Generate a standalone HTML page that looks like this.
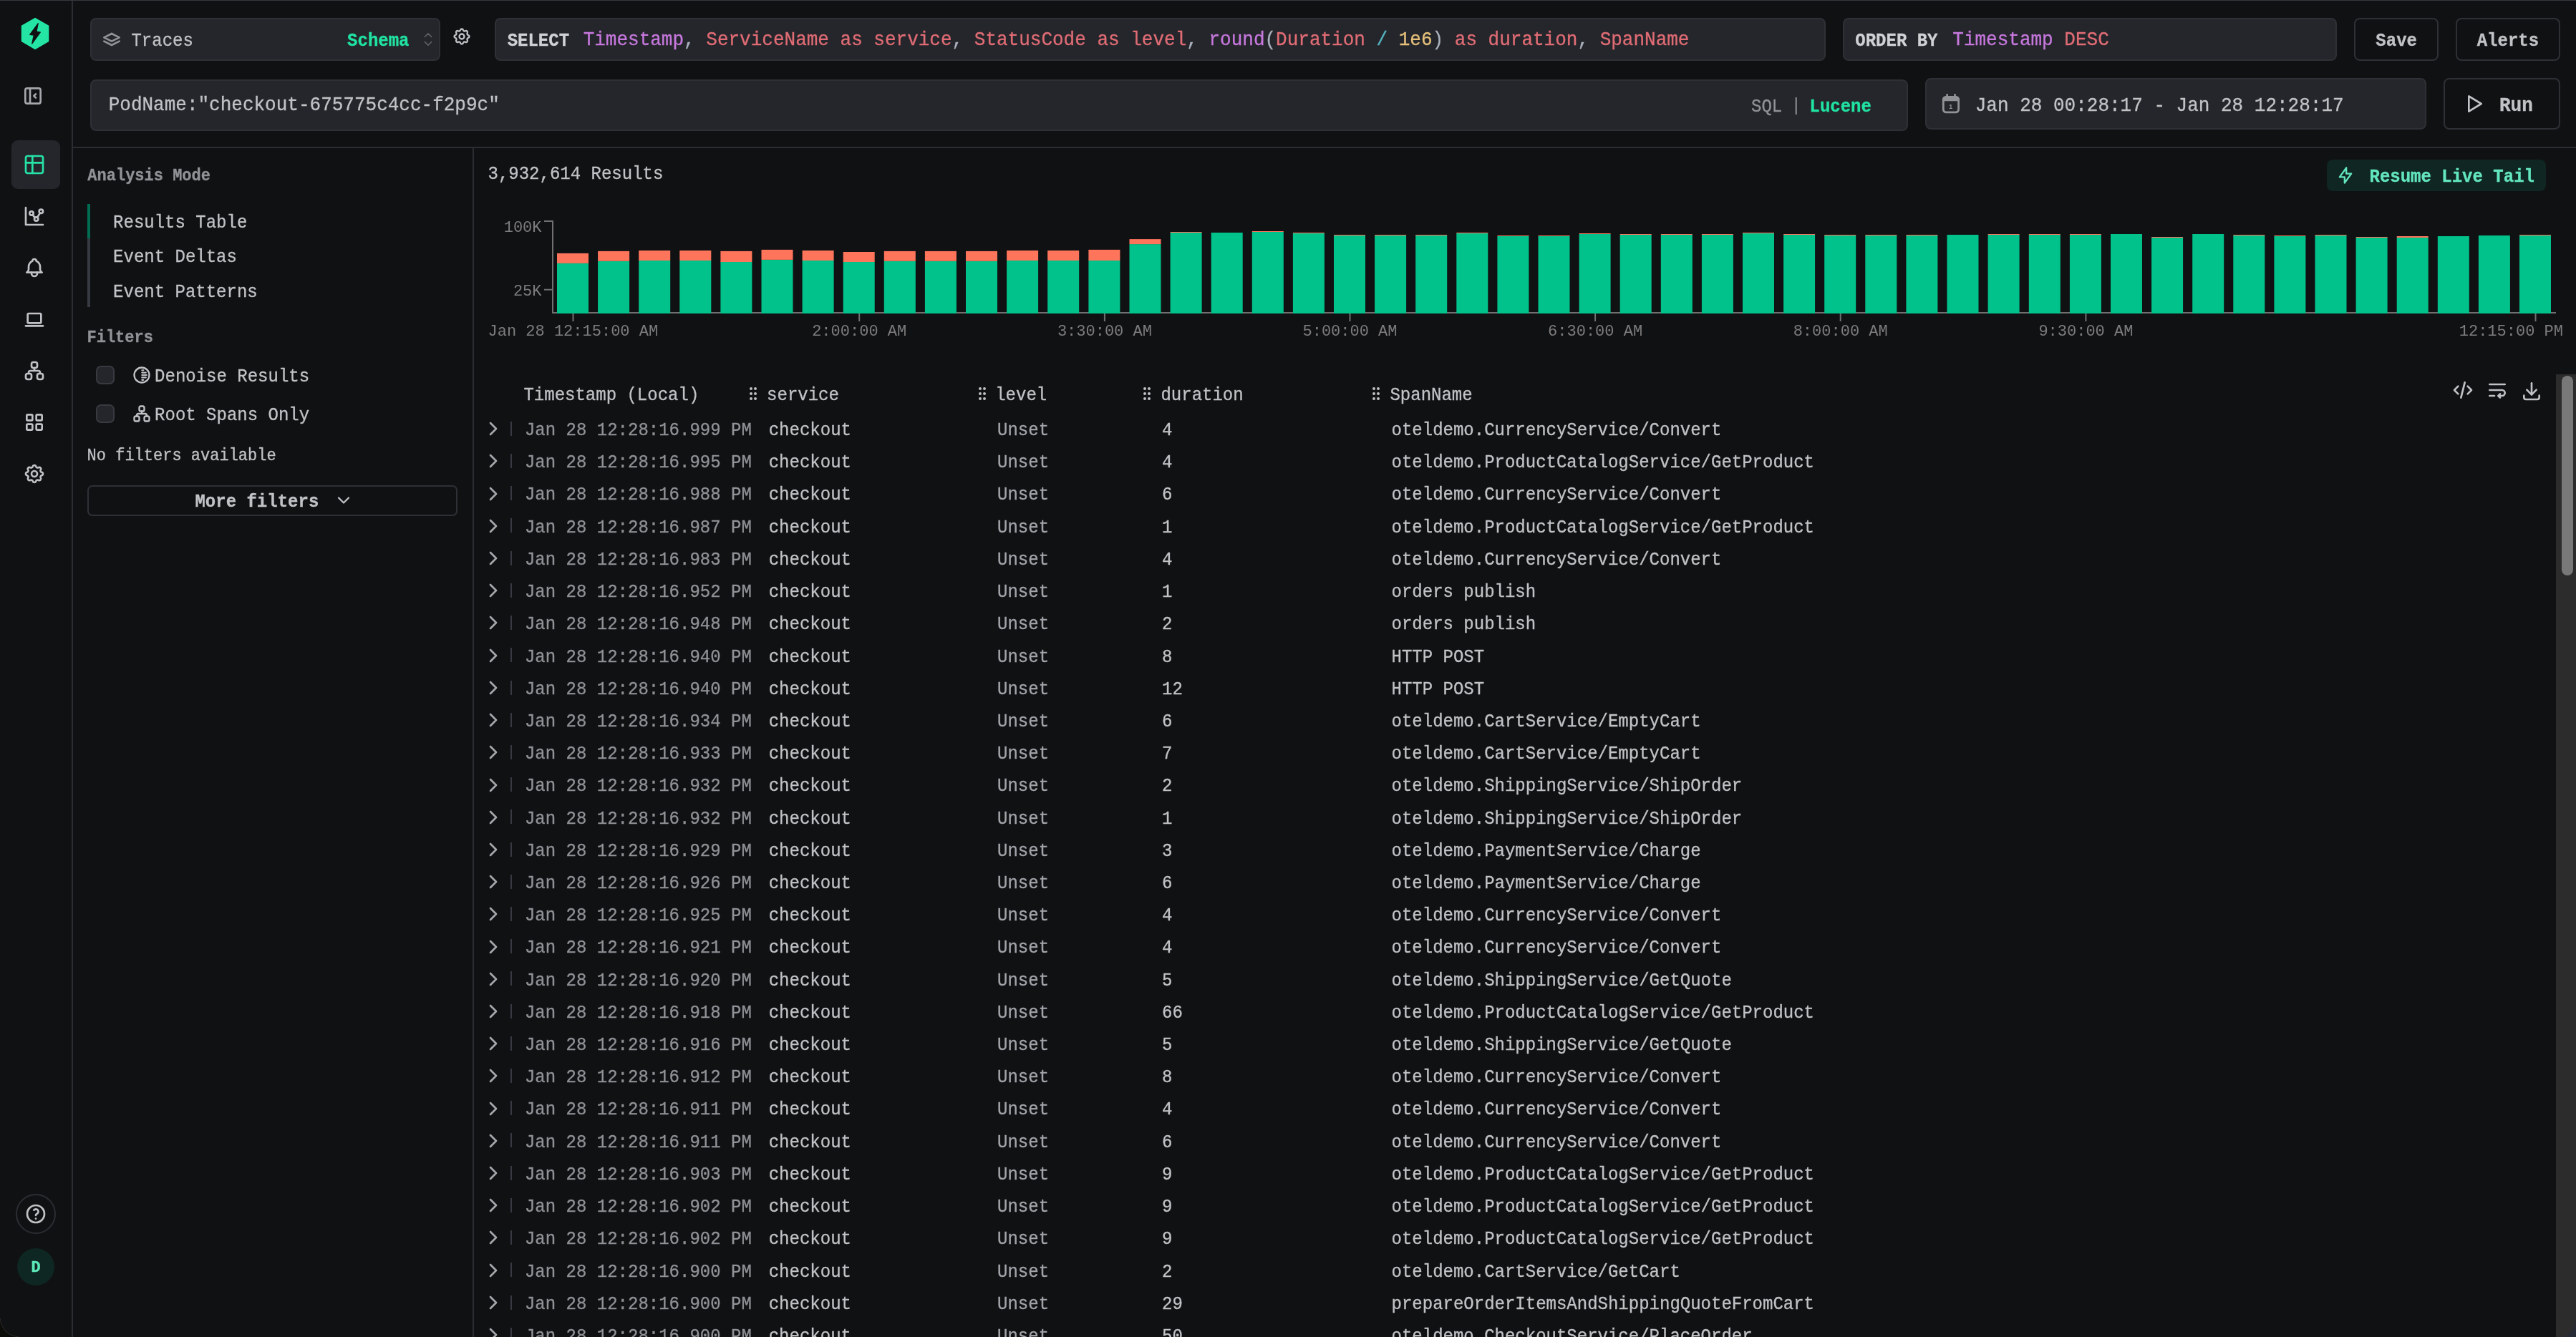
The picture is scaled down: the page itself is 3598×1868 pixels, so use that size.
<!DOCTYPE html>
<html lang="en"><head><meta charset="utf-8"><title>HyperDX Search</title>
<style>
html,body{margin:0;padding:0;}
body{width:3598px;height:1868px;overflow:hidden;background:#101113;position:relative;
 font-family:"Liberation Mono","DejaVu Sans Mono",monospace;color:#c1c2c5;font-size:24px;}
#app{position:absolute;left:0;top:0;width:3598px;height:1868px;will-change:transform;}
.a{position:absolute;white-space:pre;line-height:1;-webkit-text-stroke:0.3px;}
.ic{position:absolute;overflow:visible;}
.box{position:absolute;box-sizing:border-box;background:#25262b;border:2px solid #2e3036;border-radius:8px;}
.btn{position:absolute;box-sizing:border-box;background:#101113;border:2px solid #2e3036;border-radius:8px;}
.b{font-weight:bold;}
.t24{font-size:24px;height:24px;transform:scaleY(1.07);transform-origin:50% 50%;}
.t26{font-size:26px;height:26px;transform:scaleY(1.07);transform-origin:50% 50%;}
.t22{font-size:22px;height:22px;transform:scaleY(1.07);transform-origin:50% 50%;}
.mut{color:#909296;}
.lvl{color:#a3a4aa;}
.row{position:absolute;left:0;height:46px;width:3560px;}
.kw{color:#c678dd}.id{color:#e06c75}.pn{color:#abb2bf}.op{color:#56b6c2}.nm{color:#e5c07b}
</style></head><body><div id="app">

<div class="a" style="left:0;top:0;width:3598px;height:1px;background:#37383f"></div>
<div class="a" style="left:100px;top:1px;width:2px;height:1867px;background:#2c2d33"></div>
<div class="a" style="left:102px;top:205px;width:3496px;height:2px;background:#2c2d33"></div>
<div class="a" style="left:660px;top:207px;width:2px;height:1661px;background:#2c2d33"></div>
<svg class="ic" style="left:20px;top:15px" width="60" height="65" viewBox="20 15 60 65"><path d="M49.05 25.6 L67.5 36.25 L67.5 57.55 L49.05 68.2 L30.6 57.55 L30.6 36.25 Z" fill="#24e5a4" stroke="#24e5a4" stroke-width="1.6" stroke-linejoin="round"/><path d="M53.3 32.6 L41.7 48.3 L47.3 49.2 L44.7 61.2 L56.3 45.1 L51.0 44.0 Z" fill="#101113" stroke="#101113" stroke-width="1.2" stroke-linejoin="round"/></svg>
<svg class="ic" style="left:30px;top:118px" width="32" height="32" viewBox="0 0 24 24" fill="none" stroke="#a6a7ab" stroke-width="2" stroke-linecap="round" stroke-linejoin="round"><path d="M4 4m0 2a2 2 0 0 1 2 -2h12a2 2 0 0 1 2 2v12a2 2 0 0 1 -2 2h-12a2 2 0 0 1 -2 -2z"/><path d="M9 4v16"/><path d="M15 10l-2 2l2 2"/></svg>
<div class="a" style="left:16px;top:196px;width:68px;height:68px;border-radius:9px;background:#25262b"></div>
<svg class="ic" style="left:32px;top:214px" width="32" height="32" viewBox="0 0 24 24" fill="none" stroke="#25e2a5" stroke-width="2" stroke-linecap="round" stroke-linejoin="round"><path d="M3 5a2 2 0 0 1 2 -2h14a2 2 0 0 1 2 2v14a2 2 0 0 1 -2 2h-14a2 2 0 0 1 -2 -2v-14z"/><path d="M3 10h18"/><path d="M10 3v18"/></svg>
<svg class="ic" style="left:32px;top:286px" width="32" height="32" viewBox="0 0 24 24" fill="none" stroke="#c1c2c5" stroke-width="2" stroke-linecap="round" stroke-linejoin="round"><path d="M3 3v18h18"/><path d="M9 9m-2 0a2 2 0 1 0 4 0a2 2 0 1 0 -4 0"/><path d="M19 7m-2 0a2 2 0 1 0 4 0a2 2 0 1 0 -4 0"/><path d="M14 15m-2 0a2 2 0 1 0 4 0a2 2 0 1 0 -4 0"/><path d="M10.16 10.62l2.34 2.88"/><path d="M15.088 13.328l2.837 -4.586"/></svg>
<svg class="ic" style="left:32px;top:358px" width="32" height="32" viewBox="0 0 24 24" fill="none" stroke="#c1c2c5" stroke-width="2" stroke-linecap="round" stroke-linejoin="round"><path d="M10 5a2 2 0 1 1 4 0a7 7 0 0 1 4 6v3a4 4 0 0 0 2 3h-16a4 4 0 0 0 2 -3v-3a7 7 0 0 1 4 -6"/><path d="M9 17v1a3 3 0 0 0 6 0v-1"/></svg>
<svg class="ic" style="left:32px;top:430px" width="32" height="32" viewBox="0 0 24 24" fill="none" stroke="#c1c2c5" stroke-width="2" stroke-linecap="round" stroke-linejoin="round"><path d="M3 19l18 0"/><path d="M5 6m0 1a1 1 0 0 1 1 -1h12a1 1 0 0 1 1 1v8a1 1 0 0 1 -1 1h-12a1 1 0 0 1 -1 -1z"/></svg>
<svg class="ic" style="left:32px;top:502px" width="32" height="32" viewBox="0 0 24 24" fill="none" stroke="#c1c2c5" stroke-width="2" stroke-linecap="round" stroke-linejoin="round"><path d="M3 15m0 2a2 2 0 0 1 2 -2h2a2 2 0 0 1 2 2v2a2 2 0 0 1 -2 2h-2a2 2 0 0 1 -2 -2z"/><path d="M15 15m0 2a2 2 0 0 1 2 -2h2a2 2 0 0 1 2 2v2a2 2 0 0 1 -2 2h-2a2 2 0 0 1 -2 -2z"/><path d="M9 3m0 2a2 2 0 0 1 2 -2h2a2 2 0 0 1 2 2v2a2 2 0 0 1 -2 2h-2a2 2 0 0 1 -2 -2z"/><path d="M6 15v-1a2 2 0 0 1 2 -2h8a2 2 0 0 1 2 2v1"/><path d="M12 9l0 3"/></svg>
<svg class="ic" style="left:32px;top:574px" width="32" height="32" viewBox="0 0 24 24" fill="none" stroke="#c1c2c5" stroke-width="2" stroke-linecap="round" stroke-linejoin="round"><path d="M4 4m0 1a1 1 0 0 1 1 -1h4a1 1 0 0 1 1 1v4a1 1 0 0 1 -1 1h-4a1 1 0 0 1 -1 -1z"/><path d="M14 4m0 1a1 1 0 0 1 1 -1h4a1 1 0 0 1 1 1v4a1 1 0 0 1 -1 1h-4a1 1 0 0 1 -1 -1z"/><path d="M4 14m0 1a1 1 0 0 1 1 -1h4a1 1 0 0 1 1 1v4a1 1 0 0 1 -1 1h-4a1 1 0 0 1 -1 -1z"/><path d="M14 14m0 1a1 1 0 0 1 1 -1h4a1 1 0 0 1 1 1v4a1 1 0 0 1 -1 1h-4a1 1 0 0 1 -1 -1z"/></svg>
<svg class="ic" style="left:32px;top:646px" width="32" height="32" viewBox="0 0 24 24" fill="none" stroke="#c1c2c5" stroke-width="2" stroke-linecap="round" stroke-linejoin="round"><path d="M10.325 4.317c.426 -1.756 2.924 -1.756 3.35 0a1.724 1.724 0 0 0 2.573 1.066c1.543 -.94 3.31 .826 2.37 2.37a1.724 1.724 0 0 0 1.065 2.572c1.756 .426 1.756 2.924 0 3.35a1.724 1.724 0 0 0 -1.066 2.573c.94 1.543 -.826 3.31 -2.37 2.37a1.724 1.724 0 0 0 -2.572 1.065c-.426 1.756 -2.924 1.756 -3.35 0a1.724 1.724 0 0 0 -2.573 -1.066c-1.543 .94 -3.31 -.826 -2.37 -2.37a1.724 1.724 0 0 0 -1.065 -2.572c-1.756 -.426 -1.756 -2.924 0 -3.35a1.724 1.724 0 0 0 1.066 -2.573c-.94 -1.543 .826 -3.31 2.37 -2.37c1 .608 2.296 .07 2.572 -1.065z"/><path d="M9 12a3 3 0 1 0 6 0a3 3 0 0 0 -6 0"/></svg>
<div class="a" style="left:22px;top:1668px;width:56px;height:56px;box-sizing:border-box;border:2px solid #2c2d33;border-radius:50%"></div>
<svg class="ic" style="left:34px;top:1680px" width="32" height="32" viewBox="0 0 24 24" fill="none" stroke="#c1c2c5" stroke-width="2" stroke-linecap="round" stroke-linejoin="round"><path d="M12 12m-9 0a9 9 0 1 0 18 0a9 9 0 1 0 -18 0"/><path d="M12 17l0 .01"/><path d="M12 13.5a1.5 1.5 0 0 1 1 -1.5a2.6 2.6 0 1 0 -3 -4"/></svg>
<div class="a b" style="left:24px;top:1744px;width:52px;height:52px;border-radius:50%;background:#0f2723;color:#5de8b8;font-size:22px;line-height:55px;text-align:center;-webkit-text-stroke:0.4px">D</div>
<div class="box" style="left:126px;top:25px;width:489px;height:60px"></div>
<svg class="ic" style="left:140px;top:39px" width="32" height="32" viewBox="0 0 24 24" fill="none" stroke="#909296" stroke-width="2" stroke-linecap="round" stroke-linejoin="round"><path d="M12 6l-8 4l8 4l8 -4l-8 -4"/><path d="M4 14l8 4l8 -4"/></svg>
<div id="traces" class="a t24 " style="left:183.43px;top:46.15px;">Traces</div>
<div id="schema" class="a t24 b" style="left:485.08px;top:46.15px;color:#20e3a2">Schema</div>
<svg class="ic" style="left:583.7px;top:41px" width="28" height="28" viewBox="0 0 24 24" fill="none" stroke="#5c5f66" stroke-width="1.5" stroke-linecap="round" stroke-linejoin="round"><path d="M8 9l4 -4l4 4"/><path d="M16 15l-4 4l-4 -4"/></svg>
<svg class="ic" style="left:631px;top:37px" width="28" height="28" viewBox="0 0 24 24" fill="none" stroke="#c1c2c5" stroke-width="2" stroke-linecap="round" stroke-linejoin="round"><path d="M10.325 4.317c.426 -1.756 2.924 -1.756 3.35 0a1.724 1.724 0 0 0 2.573 1.066c1.543 -.94 3.31 .826 2.37 2.37a1.724 1.724 0 0 0 1.065 2.572c1.756 .426 1.756 2.924 0 3.35a1.724 1.724 0 0 0 -1.066 2.573c.94 1.543 -.826 3.31 -2.37 2.37a1.724 1.724 0 0 0 -2.572 1.065c-.426 1.756 -2.924 1.756 -3.35 0a1.724 1.724 0 0 0 -2.573 -1.066c-1.543 .94 -3.31 -.826 -2.37 -2.37a1.724 1.724 0 0 0 -1.065 -2.572c-1.756 -.426 -1.756 -2.924 0 -3.35a1.724 1.724 0 0 0 1.066 -2.573c-.94 -1.543 .826 -3.31 2.37 -2.37c1 .608 2.296 .07 2.572 -1.065z"/><path d="M9 12a3 3 0 1 0 6 0a3 3 0 0 0 -6 0"/></svg>
<div class="box" style="left:691px;top:25px;width:1859px;height:60px"></div>
<div id="select" class="a t24 b" style="left:708.66px;top:45.80px;color:#d0d1d4">SELECT</div>
<div id="ed1" class="a t26 " style="left:814.67px;top:43.35px;"><span class="kw">Timestamp</span><span class="pn">,</span> <span class="id">ServiceName as service</span><span class="pn">,</span> <span class="id">StatusCode as level</span><span class="pn">,</span> <span class="kw">round</span><span class="pn">(</span><span class="id">Duration</span> <span class="op">/</span> <span class="nm">1e6</span><span class="pn">)</span> <span class="id">as duration</span><span class="pn">,</span> <span class="id">SpanName</span></div>
<div class="box" style="left:2574px;top:25px;width:690px;height:60px"></div>
<div id="orderby" class="a t24 b" style="left:2591.27px;top:45.80px;color:#d0d1d4">ORDER BY</div>
<div id="ed2" class="a t26 " style="left:2727.29px;top:43.35px;"><span class="kw">Timestamp</span> <span class="id">DESC</span></div>
<div class="btn" style="left:3288px;top:25px;width:118px;height:60px"></div>
<div id="save" class="a t24 b" style="left:3318.37px;top:46.10px;">Save</div>
<div class="btn" style="left:3430px;top:25px;width:146px;height:60px"></div>
<div id="alerts" class="a t24 b" style="left:3459.72px;top:46.10px;">Alerts</div>
<div class="box" style="left:126px;top:111px;width:2539px;height:72px"></div>
<div id="pod" class="a t26 " style="left:151.70px;top:133.90px;">PodName:"checkout-675775c4cc-f2p9c"</div>
<div id="sql" class="a t24 mut" style="left:2446.06px;top:138.15px;">SQL</div>
<div class="a t24 mut" style="left:2501.6px;top:137.2px;-webkit-text-stroke:0">|</div>
<div id="lucene" class="a t24 b" style="left:2527.51px;top:138.15px;color:#20e3a2">Lucene</div>
<div class="box" style="left:2689px;top:109px;width:700px;height:72px"></div>
<svg class="ic" style="left:2711px;top:129px" width="28" height="32" viewBox="0 0 28 32"><rect x="3.3" y="6.4" width="21.3" height="21.5" rx="3.8" fill="none" stroke="#909296" stroke-width="2.8"/><path d="M1.9 12.3 V10.2 a5.2 5.2 0 0 1 5.2 -5.2 h13.7 a5.2 5.2 0 0 1 5.2 5.2 V12.3 Z" fill="#909296"/><path d="M8.6 3.3v3M19.5 3.3v3" stroke="#909296" stroke-width="2.8" stroke-linecap="round"/><text x="13.6" y="22.9" font-size="9.5" font-weight="bold" text-anchor="middle" fill="#909296" font-family="Liberation Sans">1</text></svg>
<div id="date" class="a t26 " style="left:2758.75px;top:135.05px;">Jan 28 00:28:17 - Jan 28 12:28:17</div>
<div class="btn" style="left:3413px;top:109px;width:163px;height:72px"></div>
<svg class="ic" style="left:3438.6px;top:129px" width="32" height="32" viewBox="0 0 24 24" fill="none" stroke="#c1c2c5" stroke-width="2" stroke-linecap="round" stroke-linejoin="round"><path d="M7 4v16l13 -8z"/></svg>
<div id="run" class="a t26 b" style="left:3490.93px;top:135.10px;">Run</div>
<div id="analysis" class="a t22 b mut" style="left:122.35px;top:236.25px;">Analysis Mode</div>
<div class="a" style="left:122px;top:285px;width:4px;height:144px;background:#373a42"></div>
<div class="a" style="left:122px;top:285px;width:4px;height:48px;background:#006d52"></div>
<div id="tab1" class="a t24 " style="left:158.09px;top:300.30px;">Results Table</div>
<div id="tab2" class="a t24 " style="left:158.09px;top:348.30px;">Event Deltas</div>
<div id="tab3" class="a t24 " style="left:158.09px;top:396.50px;">Event Patterns</div>
<div id="filters" class="a t22 b mut" style="left:121.51px;top:462.30px;">Filters</div>
<div class="a" style="left:134px;top:511.1px;width:26px;height:26px;box-sizing:border-box;border-radius:7px;background:#25262b;border:2px solid #373a40"></div>
<div class="a" style="left:134px;top:565px;width:26px;height:26px;box-sizing:border-box;border-radius:7px;background:#25262b;border:2px solid #373a40"></div>
<svg class="ic" style="left:184px;top:510px" width="28" height="28" viewBox="0 0 24 24" fill="none" stroke="#c1c2c5" stroke-width="2" stroke-linecap="round" stroke-linejoin="round"><path d="M12 12m-9 0a9 9 0 1 0 18 0a9 9 0 1 0 -18 0"/><g stroke-width="1.9"><path d="M12.3 6.2h1.6"/><path d="M12.3 9.1h4.6"/><path d="M12.3 12h5.6"/><path d="M12.3 14.9h4.6"/><path d="M12.3 17.8h1.6"/></g></svg>
<div id="denoise" class="a t24 " style="left:216.09px;top:514.85px;">Denoise Results</div>
<svg class="ic" style="left:184px;top:564px" width="28" height="28" viewBox="0 0 24 24" fill="none" stroke="#c1c2c5" stroke-width="2" stroke-linecap="round" stroke-linejoin="round"><path d="M3 15m0 2a2 2 0 0 1 2 -2h2a2 2 0 0 1 2 2v2a2 2 0 0 1 -2 2h-2a2 2 0 0 1 -2 -2z"/><path d="M15 15m0 2a2 2 0 0 1 2 -2h2a2 2 0 0 1 2 2v2a2 2 0 0 1 -2 2h-2a2 2 0 0 1 -2 -2z"/><path d="M9 3m0 2a2 2 0 0 1 2 -2h2a2 2 0 0 1 2 2v2a2 2 0 0 1 -2 2h-2a2 2 0 0 1 -2 -2z"/><path d="M6 15v-1a2 2 0 0 1 2 -2h8a2 2 0 0 1 2 2v1"/><path d="M12 9l0 3"/></svg>
<div id="rootspans" class="a t24 " style="left:216.09px;top:569.25px;">Root Spans Only</div>
<div id="nofilters" class="a t22 " style="left:121.61px;top:627.20px;">No filters available</div>
<div class="btn" style="left:122px;top:677.5px;width:517px;height:43px;border-radius:7px"></div>
<div id="morefilters" class="a t24 b" style="left:272.46px;top:689.85px;">More filters</div>
<svg class="ic" style="left:466px;top:685.1px" width="28" height="28" viewBox="0 0 24 24" fill="none" stroke="#c1c2c5" stroke-width="2" stroke-linecap="round" stroke-linejoin="round"><path d="M6 9l6 6l6 -6"/></svg>
<div id="count" class="a t24 " style="left:681.51px;top:232.10px;">3,932,614 Results</div>
<div class="a" style="left:3250px;top:223px;width:306px;height:44px;border-radius:8px;background:#0f2622"></div>
<svg class="ic" style="left:3262px;top:231px" width="28" height="28" viewBox="0 0 24 24" fill="none" stroke="#63e6be" stroke-width="2" stroke-linecap="round" stroke-linejoin="round"><path d="M13 3l0 7l6 0l-8 11l0 -7l-6 0l8 -11"/></svg>
<div id="livetail" class="a t24 b" style="left:3309.51px;top:236.15px;color:#63e6be">Resume Live Tail</div>
<svg class="ic" style="left:660px;top:290px" width="2938" height="200" viewBox="660 290 2938 200" font-family="Liberation Mono, monospace"><path d="M760 309H772V438" fill="none" stroke="#707070" stroke-width="2"/><path d="M771 437H3570" fill="none" stroke="#707070" stroke-width="2"/><path d="M760 404.7H772" fill="none" stroke="#707070" stroke-width="2"/><rect x="778.0" y="367.9" width="44" height="70.1" fill="#00c28a"/><rect x="778.0" y="353.9" width="44" height="14.0" fill="#ff755c"/><rect x="835.1" y="364.8" width="44" height="73.2" fill="#00c28a"/><rect x="835.1" y="350.9" width="44" height="13.9" fill="#ff755c"/><rect x="892.2" y="364" width="44" height="74.0" fill="#00c28a"/><rect x="892.2" y="350" width="44" height="14.0" fill="#ff755c"/><rect x="949.3" y="364" width="44" height="74.0" fill="#00c28a"/><rect x="949.3" y="350" width="44" height="14.0" fill="#ff755c"/><rect x="1006.4" y="366" width="44" height="72.0" fill="#00c28a"/><rect x="1006.4" y="350.9" width="44" height="15.1" fill="#ff755c"/><rect x="1063.5" y="362.9" width="44" height="75.1" fill="#00c28a"/><rect x="1063.5" y="348.9" width="44" height="14.0" fill="#ff755c"/><rect x="1120.6" y="364" width="44" height="74.0" fill="#00c28a"/><rect x="1120.6" y="350" width="44" height="14.0" fill="#ff755c"/><rect x="1177.7" y="366" width="44" height="72.0" fill="#00c28a"/><rect x="1177.7" y="352" width="44" height="14.0" fill="#ff755c"/><rect x="1234.8" y="364.8" width="44" height="73.2" fill="#00c28a"/><rect x="1234.8" y="350.9" width="44" height="13.9" fill="#ff755c"/><rect x="1291.9" y="364.8" width="44" height="73.2" fill="#00c28a"/><rect x="1291.9" y="350.9" width="44" height="13.9" fill="#ff755c"/><rect x="1349.0" y="364.8" width="44" height="73.2" fill="#00c28a"/><rect x="1349.0" y="350.9" width="44" height="13.9" fill="#ff755c"/><rect x="1406.1" y="364" width="44" height="74.0" fill="#00c28a"/><rect x="1406.1" y="350" width="44" height="14.0" fill="#ff755c"/><rect x="1463.2" y="364" width="44" height="74.0" fill="#00c28a"/><rect x="1463.2" y="350" width="44" height="14.0" fill="#ff755c"/><rect x="1520.4" y="364" width="44" height="74.0" fill="#00c28a"/><rect x="1520.4" y="348.9" width="44" height="15.1" fill="#ff755c"/><rect x="1577.5" y="341.1" width="44" height="96.9" fill="#00c28a"/><rect x="1577.5" y="334.1" width="44" height="7.0" fill="#ff755c"/><rect x="1634.6" y="325" width="44" height="113.0" fill="#00c28a"/><rect x="1634.6" y="324" width="44" height="1.0" fill="#ff755c"/><rect x="1691.7" y="325" width="44" height="113.0" fill="#00c28a"/><rect x="1748.8" y="324" width="44" height="114.0" fill="#00c28a"/><rect x="1748.8" y="323" width="44" height="1.0" fill="#ff755c"/><rect x="1805.9" y="326" width="44" height="112.0" fill="#00c28a"/><rect x="1805.9" y="325" width="44" height="1.0" fill="#ff755c"/><rect x="1863.0" y="329" width="44" height="109.0" fill="#00c28a"/><rect x="1863.0" y="328" width="44" height="1.0" fill="#ff755c"/><rect x="1920.1" y="329" width="44" height="109.0" fill="#00c28a"/><rect x="1920.1" y="328" width="44" height="1.0" fill="#ff755c"/><rect x="1977.2" y="329" width="44" height="109.0" fill="#00c28a"/><rect x="1977.2" y="328" width="44" height="1.0" fill="#ff755c"/><rect x="2034.3" y="326" width="44" height="112.0" fill="#00c28a"/><rect x="2034.3" y="325" width="44" height="1.0" fill="#ff755c"/><rect x="2091.4" y="330" width="44" height="108.0" fill="#00c28a"/><rect x="2091.4" y="329" width="44" height="1.0" fill="#ff755c"/><rect x="2148.5" y="330" width="44" height="108.0" fill="#00c28a"/><rect x="2148.5" y="329" width="44" height="1.0" fill="#ff755c"/><rect x="2205.6" y="327" width="44" height="111.0" fill="#00c28a"/><rect x="2205.6" y="326" width="44" height="1.0" fill="#ff755c"/><rect x="2262.7" y="328" width="44" height="110.0" fill="#00c28a"/><rect x="2262.7" y="327" width="44" height="1.0" fill="#ff755c"/><rect x="2319.8" y="328" width="44" height="110.0" fill="#00c28a"/><rect x="2319.8" y="327" width="44" height="1.0" fill="#ff755c"/><rect x="2376.9" y="328" width="44" height="110.0" fill="#00c28a"/><rect x="2376.9" y="327" width="44" height="1.0" fill="#ff755c"/><rect x="2434.0" y="326" width="44" height="112.0" fill="#00c28a"/><rect x="2434.0" y="325" width="44" height="1.0" fill="#ff755c"/><rect x="2491.1" y="328" width="44" height="110.0" fill="#00c28a"/><rect x="2491.1" y="327" width="44" height="1.0" fill="#ff755c"/><rect x="2548.2" y="329" width="44" height="109.0" fill="#00c28a"/><rect x="2548.2" y="328" width="44" height="1.0" fill="#ff755c"/><rect x="2605.3" y="329" width="44" height="109.0" fill="#00c28a"/><rect x="2605.3" y="328" width="44" height="1.0" fill="#ff755c"/><rect x="2662.4" y="329" width="44" height="109.0" fill="#00c28a"/><rect x="2662.4" y="328" width="44" height="1.0" fill="#ff755c"/><rect x="2719.5" y="328" width="44" height="110.0" fill="#00c28a"/><rect x="2776.6" y="328" width="44" height="110.0" fill="#00c28a"/><rect x="2776.6" y="327" width="44" height="1.0" fill="#ff755c"/><rect x="2833.8" y="328" width="44" height="110.0" fill="#00c28a"/><rect x="2833.8" y="327" width="44" height="1.0" fill="#ff755c"/><rect x="2890.9" y="328" width="44" height="110.0" fill="#00c28a"/><rect x="2890.9" y="327" width="44" height="1.0" fill="#ff755c"/><rect x="2948.0" y="327" width="44" height="111.0" fill="#00c28a"/><rect x="3005.1" y="332" width="44" height="106.0" fill="#00c28a"/><rect x="3005.1" y="331" width="44" height="1.0" fill="#ff755c"/><rect x="3062.2" y="327" width="44" height="111.0" fill="#00c28a"/><rect x="3119.3" y="329" width="44" height="109.0" fill="#00c28a"/><rect x="3119.3" y="328" width="44" height="1.0" fill="#ff755c"/><rect x="3176.4" y="330" width="44" height="108.0" fill="#00c28a"/><rect x="3176.4" y="329" width="44" height="1.0" fill="#ff755c"/><rect x="3233.5" y="329" width="44" height="109.0" fill="#00c28a"/><rect x="3233.5" y="328" width="44" height="1.0" fill="#ff755c"/><rect x="3290.6" y="332" width="44" height="106.0" fill="#00c28a"/><rect x="3290.6" y="331" width="44" height="1.0" fill="#ff755c"/><rect x="3347.7" y="332" width="44" height="106.0" fill="#00c28a"/><rect x="3347.7" y="330" width="44" height="2.0" fill="#ff755c"/><rect x="3404.8" y="330" width="44" height="108.0" fill="#00c28a"/><rect x="3461.9" y="329" width="44" height="109.0" fill="#00c28a"/><rect x="3519.0" y="329" width="44" height="109.0" fill="#00c28a"/><rect x="3519.0" y="328" width="44" height="1.0" fill="#ff755c"/><path d="M800.5 438V449" stroke="#707070" stroke-width="2"/><text x="681.5" y="469" font-size="22" fill="#7d7d7d">Jan 28 12:15:00 AM</text><path d="M1200.2 438V449" stroke="#707070" stroke-width="2"/><text x="1200.2" y="469" font-size="22" fill="#7d7d7d" text-anchor="middle">2:00:00 AM</text><path d="M1542.9 438V449" stroke="#707070" stroke-width="2"/><text x="1542.9" y="469" font-size="22" fill="#7d7d7d" text-anchor="middle">3:30:00 AM</text><path d="M1885.5 438V449" stroke="#707070" stroke-width="2"/><text x="1885.5" y="469" font-size="22" fill="#7d7d7d" text-anchor="middle">5:00:00 AM</text><path d="M2228.1 438V449" stroke="#707070" stroke-width="2"/><text x="2228.1" y="469" font-size="22" fill="#7d7d7d" text-anchor="middle">6:30:00 AM</text><path d="M2570.7 438V449" stroke="#707070" stroke-width="2"/><text x="2570.7" y="469" font-size="22" fill="#7d7d7d" text-anchor="middle">8:00:00 AM</text><path d="M2913.4 438V449" stroke="#707070" stroke-width="2"/><text x="2913.4" y="469" font-size="22" fill="#7d7d7d" text-anchor="middle">9:30:00 AM</text><path d="M3541.5 438V449" stroke="#707070" stroke-width="2"/><text x="3580" y="469" font-size="22" fill="#7d7d7d" text-anchor="end">12:15:00 PM</text><text x="756.5" y="324" font-size="22" fill="#7d7d7d" text-anchor="end">100K</text><text x="756.5" y="413" font-size="22" fill="#7d7d7d" text-anchor="end">25K</text></svg>
<div id="h_ts" class="a t24 " style="left:731.44px;top:541.00px;">Timestamp (Local)</div>
<svg class="ic" style="left:1039.5px;top:537.7px" width="24" height="24" viewBox="0 0 24 24" fill="none" stroke="#c1c2c5" stroke-width="2" stroke-linecap="round" stroke-linejoin="round"><path d="M9 5m-1 0a1 1 0 1 0 2 0a1 1 0 1 0 -2 0"/><path d="M9 12m-1 0a1 1 0 1 0 2 0a1 1 0 1 0 -2 0"/><path d="M9 19m-1 0a1 1 0 1 0 2 0a1 1 0 1 0 -2 0"/><path d="M15 5m-1 0a1 1 0 1 0 2 0a1 1 0 1 0 -2 0"/><path d="M15 12m-1 0a1 1 0 1 0 2 0a1 1 0 1 0 -2 0"/><path d="M15 19m-1 0a1 1 0 1 0 2 0a1 1 0 1 0 -2 0"/></svg>
<div id="h_service" class="a t24 " style="left:1071.08px;top:541.00px;">service</div>
<svg class="ic" style="left:1359.7px;top:537.7px" width="24" height="24" viewBox="0 0 24 24" fill="none" stroke="#c1c2c5" stroke-width="2" stroke-linecap="round" stroke-linejoin="round"><path d="M9 5m-1 0a1 1 0 1 0 2 0a1 1 0 1 0 -2 0"/><path d="M9 12m-1 0a1 1 0 1 0 2 0a1 1 0 1 0 -2 0"/><path d="M9 19m-1 0a1 1 0 1 0 2 0a1 1 0 1 0 -2 0"/><path d="M15 5m-1 0a1 1 0 1 0 2 0a1 1 0 1 0 -2 0"/><path d="M15 12m-1 0a1 1 0 1 0 2 0a1 1 0 1 0 -2 0"/><path d="M15 19m-1 0a1 1 0 1 0 2 0a1 1 0 1 0 -2 0"/></svg>
<div id="h_level" class="a t24 " style="left:1390.18px;top:541.00px;">level</div>
<svg class="ic" style="left:1590.0px;top:537.7px" width="24" height="24" viewBox="0 0 24 24" fill="none" stroke="#c1c2c5" stroke-width="2" stroke-linecap="round" stroke-linejoin="round"><path d="M9 5m-1 0a1 1 0 1 0 2 0a1 1 0 1 0 -2 0"/><path d="M9 12m-1 0a1 1 0 1 0 2 0a1 1 0 1 0 -2 0"/><path d="M9 19m-1 0a1 1 0 1 0 2 0a1 1 0 1 0 -2 0"/><path d="M15 5m-1 0a1 1 0 1 0 2 0a1 1 0 1 0 -2 0"/><path d="M15 12m-1 0a1 1 0 1 0 2 0a1 1 0 1 0 -2 0"/><path d="M15 19m-1 0a1 1 0 1 0 2 0a1 1 0 1 0 -2 0"/></svg>
<div id="h_duration" class="a t24 " style="left:1621.43px;top:541.00px;">duration</div>
<svg class="ic" style="left:1910.3px;top:537.7px" width="24" height="24" viewBox="0 0 24 24" fill="none" stroke="#c1c2c5" stroke-width="2" stroke-linecap="round" stroke-linejoin="round"><path d="M9 5m-1 0a1 1 0 1 0 2 0a1 1 0 1 0 -2 0"/><path d="M9 12m-1 0a1 1 0 1 0 2 0a1 1 0 1 0 -2 0"/><path d="M9 19m-1 0a1 1 0 1 0 2 0a1 1 0 1 0 -2 0"/><path d="M15 5m-1 0a1 1 0 1 0 2 0a1 1 0 1 0 -2 0"/><path d="M15 12m-1 0a1 1 0 1 0 2 0a1 1 0 1 0 -2 0"/><path d="M15 19m-1 0a1 1 0 1 0 2 0a1 1 0 1 0 -2 0"/></svg>
<div id="h_SpanName" class="a t24 " style="left:1941.44px;top:541.00px;">SpanName</div>
<svg class="ic" style="left:3424px;top:529px" width="32" height="32" viewBox="0 0 24 24" fill="none" stroke="#c1c2c5" stroke-width="2" stroke-linecap="round" stroke-linejoin="round"><path d="M7 8l-4 4l4 4"/><path d="M17 8l4 4l-4 4"/><path d="M14 4l-4 16"/></svg>
<svg class="ic" style="left:3472px;top:529px" width="32" height="32" viewBox="0 0 24 24" fill="none" stroke="#c1c2c5" stroke-width="2" stroke-linecap="round" stroke-linejoin="round"><path d="M4 6l16 0"/><path d="M4 18l5 0"/><path d="M4 12h13a3 3 0 0 1 0 6h-4l2 -2m0 4l-2 -2"/></svg>
<svg class="ic" style="left:3520px;top:530px" width="32" height="32" viewBox="0 0 24 24" fill="none" stroke="#c1c2c5" stroke-width="2" stroke-linecap="round" stroke-linejoin="round"><path d="M4 17v2a2 2 0 0 0 2 2h12a2 2 0 0 0 2 -2v-2"/><path d="M7 11l5 5l5 -5"/><path d="M12 4l0 12"/></svg>
<div class="row" style="top:576.55px"><svg class="ic" style="left:673px;top:6.65px" width="32" height="32" viewBox="0 0 24 24" fill="none" stroke="#a6a7ab" stroke-width="2" stroke-linecap="round" stroke-linejoin="round"><path d="M9 6l6 6l-6 6"/></svg><div class="a" style="left:713px;top:12.3px;width:2px;height:20px;background:#373a42"></div><div id="r_ts" class="a t24 mut" style="left:732.98px;top:13.50px">Jan 28 12:28:16.999 PM</div><div id="r_svc" class="a t24 " style="left:1073.72px;top:13.50px">checkout</div><div id="r_lvl" class="a t24 lvl" style="left:1393.05px;top:13.50px">Unset</div><div id="r_dur" class="a t24 " style="left:1623.11px;top:13.50px">4</div><div id="r_span" class="a t24 " style="left:1943.52px;top:13.50px">oteldemo.CurrencyService/Convert</div></div>
<div class="row" style="top:621.76px"><svg class="ic" style="left:673px;top:6.65px" width="32" height="32" viewBox="0 0 24 24" fill="none" stroke="#a6a7ab" stroke-width="2" stroke-linecap="round" stroke-linejoin="round"><path d="M9 6l6 6l-6 6"/></svg><div class="a" style="left:713px;top:12.3px;width:2px;height:20px;background:#373a42"></div><div  class="a t24 mut" style="left:732.98px;top:13.50px">Jan 28 12:28:16.995 PM</div><div  class="a t24 " style="left:1073.72px;top:13.50px">checkout</div><div  class="a t24 lvl" style="left:1393.05px;top:13.50px">Unset</div><div  class="a t24 " style="left:1623.11px;top:13.50px">4</div><div  class="a t24 " style="left:1943.52px;top:13.50px">oteldemo.ProductCatalogService/GetProduct</div></div>
<div class="row" style="top:666.97px"><svg class="ic" style="left:673px;top:6.65px" width="32" height="32" viewBox="0 0 24 24" fill="none" stroke="#a6a7ab" stroke-width="2" stroke-linecap="round" stroke-linejoin="round"><path d="M9 6l6 6l-6 6"/></svg><div class="a" style="left:713px;top:12.3px;width:2px;height:20px;background:#373a42"></div><div  class="a t24 mut" style="left:732.98px;top:13.50px">Jan 28 12:28:16.988 PM</div><div  class="a t24 " style="left:1073.72px;top:13.50px">checkout</div><div  class="a t24 lvl" style="left:1393.05px;top:13.50px">Unset</div><div  class="a t24 " style="left:1623.11px;top:13.50px">6</div><div  class="a t24 " style="left:1943.52px;top:13.50px">oteldemo.CurrencyService/Convert</div></div>
<div class="row" style="top:712.18px"><svg class="ic" style="left:673px;top:6.65px" width="32" height="32" viewBox="0 0 24 24" fill="none" stroke="#a6a7ab" stroke-width="2" stroke-linecap="round" stroke-linejoin="round"><path d="M9 6l6 6l-6 6"/></svg><div class="a" style="left:713px;top:12.3px;width:2px;height:20px;background:#373a42"></div><div  class="a t24 mut" style="left:732.98px;top:13.50px">Jan 28 12:28:16.987 PM</div><div  class="a t24 " style="left:1073.72px;top:13.50px">checkout</div><div  class="a t24 lvl" style="left:1393.05px;top:13.50px">Unset</div><div  class="a t24 " style="left:1623.11px;top:13.50px">1</div><div  class="a t24 " style="left:1943.52px;top:13.50px">oteldemo.ProductCatalogService/GetProduct</div></div>
<div class="row" style="top:757.39px"><svg class="ic" style="left:673px;top:6.65px" width="32" height="32" viewBox="0 0 24 24" fill="none" stroke="#a6a7ab" stroke-width="2" stroke-linecap="round" stroke-linejoin="round"><path d="M9 6l6 6l-6 6"/></svg><div class="a" style="left:713px;top:12.3px;width:2px;height:20px;background:#373a42"></div><div  class="a t24 mut" style="left:732.98px;top:13.50px">Jan 28 12:28:16.983 PM</div><div  class="a t24 " style="left:1073.72px;top:13.50px">checkout</div><div  class="a t24 lvl" style="left:1393.05px;top:13.50px">Unset</div><div  class="a t24 " style="left:1623.11px;top:13.50px">4</div><div  class="a t24 " style="left:1943.52px;top:13.50px">oteldemo.CurrencyService/Convert</div></div>
<div class="row" style="top:802.60px"><svg class="ic" style="left:673px;top:6.65px" width="32" height="32" viewBox="0 0 24 24" fill="none" stroke="#a6a7ab" stroke-width="2" stroke-linecap="round" stroke-linejoin="round"><path d="M9 6l6 6l-6 6"/></svg><div class="a" style="left:713px;top:12.3px;width:2px;height:20px;background:#373a42"></div><div  class="a t24 mut" style="left:732.98px;top:13.50px">Jan 28 12:28:16.952 PM</div><div  class="a t24 " style="left:1073.72px;top:13.50px">checkout</div><div  class="a t24 lvl" style="left:1393.05px;top:13.50px">Unset</div><div  class="a t24 " style="left:1623.11px;top:13.50px">1</div><div  class="a t24 " style="left:1943.52px;top:13.50px">orders publish</div></div>
<div class="row" style="top:847.81px"><svg class="ic" style="left:673px;top:6.65px" width="32" height="32" viewBox="0 0 24 24" fill="none" stroke="#a6a7ab" stroke-width="2" stroke-linecap="round" stroke-linejoin="round"><path d="M9 6l6 6l-6 6"/></svg><div class="a" style="left:713px;top:12.3px;width:2px;height:20px;background:#373a42"></div><div  class="a t24 mut" style="left:732.98px;top:13.50px">Jan 28 12:28:16.948 PM</div><div  class="a t24 " style="left:1073.72px;top:13.50px">checkout</div><div  class="a t24 lvl" style="left:1393.05px;top:13.50px">Unset</div><div  class="a t24 " style="left:1623.11px;top:13.50px">2</div><div  class="a t24 " style="left:1943.52px;top:13.50px">orders publish</div></div>
<div class="row" style="top:893.02px"><svg class="ic" style="left:673px;top:6.65px" width="32" height="32" viewBox="0 0 24 24" fill="none" stroke="#a6a7ab" stroke-width="2" stroke-linecap="round" stroke-linejoin="round"><path d="M9 6l6 6l-6 6"/></svg><div class="a" style="left:713px;top:12.3px;width:2px;height:20px;background:#373a42"></div><div  class="a t24 mut" style="left:732.98px;top:13.50px">Jan 28 12:28:16.940 PM</div><div  class="a t24 " style="left:1073.72px;top:13.50px">checkout</div><div  class="a t24 lvl" style="left:1393.05px;top:13.50px">Unset</div><div  class="a t24 " style="left:1623.11px;top:13.50px">8</div><div  class="a t24 " style="left:1943.52px;top:13.50px">HTTP POST</div></div>
<div class="row" style="top:938.23px"><svg class="ic" style="left:673px;top:6.65px" width="32" height="32" viewBox="0 0 24 24" fill="none" stroke="#a6a7ab" stroke-width="2" stroke-linecap="round" stroke-linejoin="round"><path d="M9 6l6 6l-6 6"/></svg><div class="a" style="left:713px;top:12.3px;width:2px;height:20px;background:#373a42"></div><div  class="a t24 mut" style="left:732.98px;top:13.50px">Jan 28 12:28:16.940 PM</div><div  class="a t24 " style="left:1073.72px;top:13.50px">checkout</div><div  class="a t24 lvl" style="left:1393.05px;top:13.50px">Unset</div><div  class="a t24 " style="left:1623.11px;top:13.50px">12</div><div  class="a t24 " style="left:1943.52px;top:13.50px">HTTP POST</div></div>
<div class="row" style="top:983.44px"><svg class="ic" style="left:673px;top:6.65px" width="32" height="32" viewBox="0 0 24 24" fill="none" stroke="#a6a7ab" stroke-width="2" stroke-linecap="round" stroke-linejoin="round"><path d="M9 6l6 6l-6 6"/></svg><div class="a" style="left:713px;top:12.3px;width:2px;height:20px;background:#373a42"></div><div  class="a t24 mut" style="left:732.98px;top:13.50px">Jan 28 12:28:16.934 PM</div><div  class="a t24 " style="left:1073.72px;top:13.50px">checkout</div><div  class="a t24 lvl" style="left:1393.05px;top:13.50px">Unset</div><div  class="a t24 " style="left:1623.11px;top:13.50px">6</div><div  class="a t24 " style="left:1943.52px;top:13.50px">oteldemo.CartService/EmptyCart</div></div>
<div class="row" style="top:1028.65px"><svg class="ic" style="left:673px;top:6.65px" width="32" height="32" viewBox="0 0 24 24" fill="none" stroke="#a6a7ab" stroke-width="2" stroke-linecap="round" stroke-linejoin="round"><path d="M9 6l6 6l-6 6"/></svg><div class="a" style="left:713px;top:12.3px;width:2px;height:20px;background:#373a42"></div><div  class="a t24 mut" style="left:732.98px;top:13.50px">Jan 28 12:28:16.933 PM</div><div  class="a t24 " style="left:1073.72px;top:13.50px">checkout</div><div  class="a t24 lvl" style="left:1393.05px;top:13.50px">Unset</div><div  class="a t24 " style="left:1623.11px;top:13.50px">7</div><div  class="a t24 " style="left:1943.52px;top:13.50px">oteldemo.CartService/EmptyCart</div></div>
<div class="row" style="top:1073.86px"><svg class="ic" style="left:673px;top:6.65px" width="32" height="32" viewBox="0 0 24 24" fill="none" stroke="#a6a7ab" stroke-width="2" stroke-linecap="round" stroke-linejoin="round"><path d="M9 6l6 6l-6 6"/></svg><div class="a" style="left:713px;top:12.3px;width:2px;height:20px;background:#373a42"></div><div  class="a t24 mut" style="left:732.98px;top:13.50px">Jan 28 12:28:16.932 PM</div><div  class="a t24 " style="left:1073.72px;top:13.50px">checkout</div><div  class="a t24 lvl" style="left:1393.05px;top:13.50px">Unset</div><div  class="a t24 " style="left:1623.11px;top:13.50px">2</div><div  class="a t24 " style="left:1943.52px;top:13.50px">oteldemo.ShippingService/ShipOrder</div></div>
<div class="row" style="top:1119.07px"><svg class="ic" style="left:673px;top:6.65px" width="32" height="32" viewBox="0 0 24 24" fill="none" stroke="#a6a7ab" stroke-width="2" stroke-linecap="round" stroke-linejoin="round"><path d="M9 6l6 6l-6 6"/></svg><div class="a" style="left:713px;top:12.3px;width:2px;height:20px;background:#373a42"></div><div  class="a t24 mut" style="left:732.98px;top:13.50px">Jan 28 12:28:16.932 PM</div><div  class="a t24 " style="left:1073.72px;top:13.50px">checkout</div><div  class="a t24 lvl" style="left:1393.05px;top:13.50px">Unset</div><div  class="a t24 " style="left:1623.11px;top:13.50px">1</div><div  class="a t24 " style="left:1943.52px;top:13.50px">oteldemo.ShippingService/ShipOrder</div></div>
<div class="row" style="top:1164.28px"><svg class="ic" style="left:673px;top:6.65px" width="32" height="32" viewBox="0 0 24 24" fill="none" stroke="#a6a7ab" stroke-width="2" stroke-linecap="round" stroke-linejoin="round"><path d="M9 6l6 6l-6 6"/></svg><div class="a" style="left:713px;top:12.3px;width:2px;height:20px;background:#373a42"></div><div  class="a t24 mut" style="left:732.98px;top:13.50px">Jan 28 12:28:16.929 PM</div><div  class="a t24 " style="left:1073.72px;top:13.50px">checkout</div><div  class="a t24 lvl" style="left:1393.05px;top:13.50px">Unset</div><div  class="a t24 " style="left:1623.11px;top:13.50px">3</div><div  class="a t24 " style="left:1943.52px;top:13.50px">oteldemo.PaymentService/Charge</div></div>
<div class="row" style="top:1209.49px"><svg class="ic" style="left:673px;top:6.65px" width="32" height="32" viewBox="0 0 24 24" fill="none" stroke="#a6a7ab" stroke-width="2" stroke-linecap="round" stroke-linejoin="round"><path d="M9 6l6 6l-6 6"/></svg><div class="a" style="left:713px;top:12.3px;width:2px;height:20px;background:#373a42"></div><div  class="a t24 mut" style="left:732.98px;top:13.50px">Jan 28 12:28:16.926 PM</div><div  class="a t24 " style="left:1073.72px;top:13.50px">checkout</div><div  class="a t24 lvl" style="left:1393.05px;top:13.50px">Unset</div><div  class="a t24 " style="left:1623.11px;top:13.50px">6</div><div  class="a t24 " style="left:1943.52px;top:13.50px">oteldemo.PaymentService/Charge</div></div>
<div class="row" style="top:1254.70px"><svg class="ic" style="left:673px;top:6.65px" width="32" height="32" viewBox="0 0 24 24" fill="none" stroke="#a6a7ab" stroke-width="2" stroke-linecap="round" stroke-linejoin="round"><path d="M9 6l6 6l-6 6"/></svg><div class="a" style="left:713px;top:12.3px;width:2px;height:20px;background:#373a42"></div><div  class="a t24 mut" style="left:732.98px;top:13.50px">Jan 28 12:28:16.925 PM</div><div  class="a t24 " style="left:1073.72px;top:13.50px">checkout</div><div  class="a t24 lvl" style="left:1393.05px;top:13.50px">Unset</div><div  class="a t24 " style="left:1623.11px;top:13.50px">4</div><div  class="a t24 " style="left:1943.52px;top:13.50px">oteldemo.CurrencyService/Convert</div></div>
<div class="row" style="top:1299.91px"><svg class="ic" style="left:673px;top:6.65px" width="32" height="32" viewBox="0 0 24 24" fill="none" stroke="#a6a7ab" stroke-width="2" stroke-linecap="round" stroke-linejoin="round"><path d="M9 6l6 6l-6 6"/></svg><div class="a" style="left:713px;top:12.3px;width:2px;height:20px;background:#373a42"></div><div  class="a t24 mut" style="left:732.98px;top:13.50px">Jan 28 12:28:16.921 PM</div><div  class="a t24 " style="left:1073.72px;top:13.50px">checkout</div><div  class="a t24 lvl" style="left:1393.05px;top:13.50px">Unset</div><div  class="a t24 " style="left:1623.11px;top:13.50px">4</div><div  class="a t24 " style="left:1943.52px;top:13.50px">oteldemo.CurrencyService/Convert</div></div>
<div class="row" style="top:1345.12px"><svg class="ic" style="left:673px;top:6.65px" width="32" height="32" viewBox="0 0 24 24" fill="none" stroke="#a6a7ab" stroke-width="2" stroke-linecap="round" stroke-linejoin="round"><path d="M9 6l6 6l-6 6"/></svg><div class="a" style="left:713px;top:12.3px;width:2px;height:20px;background:#373a42"></div><div  class="a t24 mut" style="left:732.98px;top:13.50px">Jan 28 12:28:16.920 PM</div><div  class="a t24 " style="left:1073.72px;top:13.50px">checkout</div><div  class="a t24 lvl" style="left:1393.05px;top:13.50px">Unset</div><div  class="a t24 " style="left:1623.11px;top:13.50px">5</div><div  class="a t24 " style="left:1943.52px;top:13.50px">oteldemo.ShippingService/GetQuote</div></div>
<div class="row" style="top:1390.33px"><svg class="ic" style="left:673px;top:6.65px" width="32" height="32" viewBox="0 0 24 24" fill="none" stroke="#a6a7ab" stroke-width="2" stroke-linecap="round" stroke-linejoin="round"><path d="M9 6l6 6l-6 6"/></svg><div class="a" style="left:713px;top:12.3px;width:2px;height:20px;background:#373a42"></div><div  class="a t24 mut" style="left:732.98px;top:13.50px">Jan 28 12:28:16.918 PM</div><div  class="a t24 " style="left:1073.72px;top:13.50px">checkout</div><div  class="a t24 lvl" style="left:1393.05px;top:13.50px">Unset</div><div  class="a t24 " style="left:1623.11px;top:13.50px">66</div><div  class="a t24 " style="left:1943.52px;top:13.50px">oteldemo.ProductCatalogService/GetProduct</div></div>
<div class="row" style="top:1435.54px"><svg class="ic" style="left:673px;top:6.65px" width="32" height="32" viewBox="0 0 24 24" fill="none" stroke="#a6a7ab" stroke-width="2" stroke-linecap="round" stroke-linejoin="round"><path d="M9 6l6 6l-6 6"/></svg><div class="a" style="left:713px;top:12.3px;width:2px;height:20px;background:#373a42"></div><div  class="a t24 mut" style="left:732.98px;top:13.50px">Jan 28 12:28:16.916 PM</div><div  class="a t24 " style="left:1073.72px;top:13.50px">checkout</div><div  class="a t24 lvl" style="left:1393.05px;top:13.50px">Unset</div><div  class="a t24 " style="left:1623.11px;top:13.50px">5</div><div  class="a t24 " style="left:1943.52px;top:13.50px">oteldemo.ShippingService/GetQuote</div></div>
<div class="row" style="top:1480.75px"><svg class="ic" style="left:673px;top:6.65px" width="32" height="32" viewBox="0 0 24 24" fill="none" stroke="#a6a7ab" stroke-width="2" stroke-linecap="round" stroke-linejoin="round"><path d="M9 6l6 6l-6 6"/></svg><div class="a" style="left:713px;top:12.3px;width:2px;height:20px;background:#373a42"></div><div  class="a t24 mut" style="left:732.98px;top:13.50px">Jan 28 12:28:16.912 PM</div><div  class="a t24 " style="left:1073.72px;top:13.50px">checkout</div><div  class="a t24 lvl" style="left:1393.05px;top:13.50px">Unset</div><div  class="a t24 " style="left:1623.11px;top:13.50px">8</div><div  class="a t24 " style="left:1943.52px;top:13.50px">oteldemo.CurrencyService/Convert</div></div>
<div class="row" style="top:1525.96px"><svg class="ic" style="left:673px;top:6.65px" width="32" height="32" viewBox="0 0 24 24" fill="none" stroke="#a6a7ab" stroke-width="2" stroke-linecap="round" stroke-linejoin="round"><path d="M9 6l6 6l-6 6"/></svg><div class="a" style="left:713px;top:12.3px;width:2px;height:20px;background:#373a42"></div><div  class="a t24 mut" style="left:732.98px;top:13.50px">Jan 28 12:28:16.911 PM</div><div  class="a t24 " style="left:1073.72px;top:13.50px">checkout</div><div  class="a t24 lvl" style="left:1393.05px;top:13.50px">Unset</div><div  class="a t24 " style="left:1623.11px;top:13.50px">4</div><div  class="a t24 " style="left:1943.52px;top:13.50px">oteldemo.CurrencyService/Convert</div></div>
<div class="row" style="top:1571.17px"><svg class="ic" style="left:673px;top:6.65px" width="32" height="32" viewBox="0 0 24 24" fill="none" stroke="#a6a7ab" stroke-width="2" stroke-linecap="round" stroke-linejoin="round"><path d="M9 6l6 6l-6 6"/></svg><div class="a" style="left:713px;top:12.3px;width:2px;height:20px;background:#373a42"></div><div  class="a t24 mut" style="left:732.98px;top:13.50px">Jan 28 12:28:16.911 PM</div><div  class="a t24 " style="left:1073.72px;top:13.50px">checkout</div><div  class="a t24 lvl" style="left:1393.05px;top:13.50px">Unset</div><div  class="a t24 " style="left:1623.11px;top:13.50px">6</div><div  class="a t24 " style="left:1943.52px;top:13.50px">oteldemo.CurrencyService/Convert</div></div>
<div class="row" style="top:1616.38px"><svg class="ic" style="left:673px;top:6.65px" width="32" height="32" viewBox="0 0 24 24" fill="none" stroke="#a6a7ab" stroke-width="2" stroke-linecap="round" stroke-linejoin="round"><path d="M9 6l6 6l-6 6"/></svg><div class="a" style="left:713px;top:12.3px;width:2px;height:20px;background:#373a42"></div><div  class="a t24 mut" style="left:732.98px;top:13.50px">Jan 28 12:28:16.903 PM</div><div  class="a t24 " style="left:1073.72px;top:13.50px">checkout</div><div  class="a t24 lvl" style="left:1393.05px;top:13.50px">Unset</div><div  class="a t24 " style="left:1623.11px;top:13.50px">9</div><div  class="a t24 " style="left:1943.52px;top:13.50px">oteldemo.ProductCatalogService/GetProduct</div></div>
<div class="row" style="top:1661.59px"><svg class="ic" style="left:673px;top:6.65px" width="32" height="32" viewBox="0 0 24 24" fill="none" stroke="#a6a7ab" stroke-width="2" stroke-linecap="round" stroke-linejoin="round"><path d="M9 6l6 6l-6 6"/></svg><div class="a" style="left:713px;top:12.3px;width:2px;height:20px;background:#373a42"></div><div  class="a t24 mut" style="left:732.98px;top:13.50px">Jan 28 12:28:16.902 PM</div><div  class="a t24 " style="left:1073.72px;top:13.50px">checkout</div><div  class="a t24 lvl" style="left:1393.05px;top:13.50px">Unset</div><div  class="a t24 " style="left:1623.11px;top:13.50px">9</div><div  class="a t24 " style="left:1943.52px;top:13.50px">oteldemo.ProductCatalogService/GetProduct</div></div>
<div class="row" style="top:1706.80px"><svg class="ic" style="left:673px;top:6.65px" width="32" height="32" viewBox="0 0 24 24" fill="none" stroke="#a6a7ab" stroke-width="2" stroke-linecap="round" stroke-linejoin="round"><path d="M9 6l6 6l-6 6"/></svg><div class="a" style="left:713px;top:12.3px;width:2px;height:20px;background:#373a42"></div><div  class="a t24 mut" style="left:732.98px;top:13.50px">Jan 28 12:28:16.902 PM</div><div  class="a t24 " style="left:1073.72px;top:13.50px">checkout</div><div  class="a t24 lvl" style="left:1393.05px;top:13.50px">Unset</div><div  class="a t24 " style="left:1623.11px;top:13.50px">9</div><div  class="a t24 " style="left:1943.52px;top:13.50px">oteldemo.ProductCatalogService/GetProduct</div></div>
<div class="row" style="top:1752.01px"><svg class="ic" style="left:673px;top:6.65px" width="32" height="32" viewBox="0 0 24 24" fill="none" stroke="#a6a7ab" stroke-width="2" stroke-linecap="round" stroke-linejoin="round"><path d="M9 6l6 6l-6 6"/></svg><div class="a" style="left:713px;top:12.3px;width:2px;height:20px;background:#373a42"></div><div  class="a t24 mut" style="left:732.98px;top:13.50px">Jan 28 12:28:16.900 PM</div><div  class="a t24 " style="left:1073.72px;top:13.50px">checkout</div><div  class="a t24 lvl" style="left:1393.05px;top:13.50px">Unset</div><div  class="a t24 " style="left:1623.11px;top:13.50px">2</div><div  class="a t24 " style="left:1943.52px;top:13.50px">oteldemo.CartService/GetCart</div></div>
<div class="row" style="top:1797.22px"><svg class="ic" style="left:673px;top:6.65px" width="32" height="32" viewBox="0 0 24 24" fill="none" stroke="#a6a7ab" stroke-width="2" stroke-linecap="round" stroke-linejoin="round"><path d="M9 6l6 6l-6 6"/></svg><div class="a" style="left:713px;top:12.3px;width:2px;height:20px;background:#373a42"></div><div  class="a t24 mut" style="left:732.98px;top:13.50px">Jan 28 12:28:16.900 PM</div><div  class="a t24 " style="left:1073.72px;top:13.50px">checkout</div><div  class="a t24 lvl" style="left:1393.05px;top:13.50px">Unset</div><div  class="a t24 " style="left:1623.11px;top:13.50px">29</div><div  class="a t24 " style="left:1943.52px;top:13.50px">prepareOrderItemsAndShippingQuoteFromCart</div></div>
<div class="row" style="top:1842.43px"><svg class="ic" style="left:673px;top:6.65px" width="32" height="32" viewBox="0 0 24 24" fill="none" stroke="#a6a7ab" stroke-width="2" stroke-linecap="round" stroke-linejoin="round"><path d="M9 6l6 6l-6 6"/></svg><div class="a" style="left:713px;top:12.3px;width:2px;height:20px;background:#373a42"></div><div  class="a t24 mut" style="left:732.98px;top:13.50px">Jan 28 12:28:16.900 PM</div><div  class="a t24 " style="left:1073.72px;top:13.50px">checkout</div><div  class="a t24 lvl" style="left:1393.05px;top:13.50px">Unset</div><div  class="a t24 " style="left:1623.11px;top:13.50px">50</div><div  class="a t24 " style="left:1943.52px;top:13.50px">oteldemo.CheckoutService/PlaceOrder</div></div>
<div class="a" style="left:3570px;top:523px;width:28px;height:1345px;background:#2c2c2c"></div>
<div class="a" style="left:3578px;top:525px;width:16px;height:279px;border-radius:8px;background:#787878"></div>
<svg class="ic" style="left:3574px;top:1844px" width="24" height="24" viewBox="0 0 24 24"><path d="M24 0 V24 H0 A24 24 0 0 0 24 0 Z" fill="#262b35"/></svg>
<svg class="ic" style="left:0;top:1842px" width="26" height="26" viewBox="0 0 26 26"><path d="M0 0 V26 H26 A26 26 0 0 1 0 0 Z" fill="#0b0b08"/><path d="M0.5 0 A25.5 25.5 0 0 0 26 25.5" fill="none" stroke="#2a2b28" stroke-width="1"/></svg>
</div></body></html>
